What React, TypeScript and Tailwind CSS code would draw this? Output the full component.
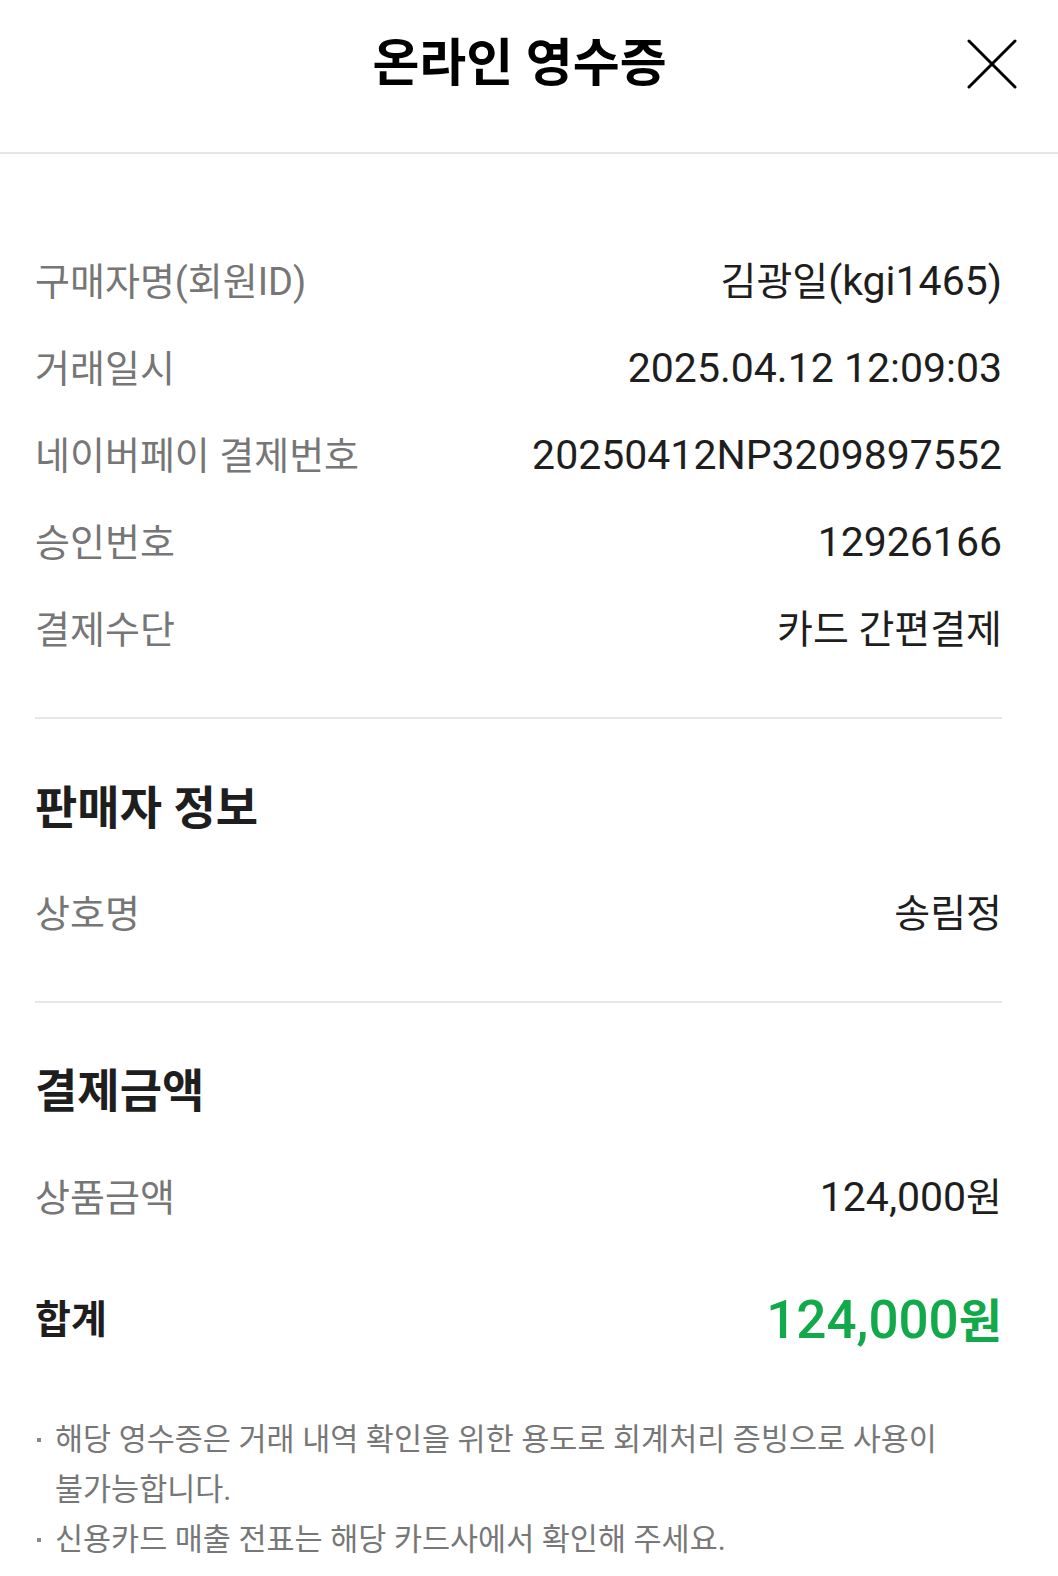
const buyerRows = [
    { label: '구매자명(회원ID)', value: <><span className="text-[39px]">김광일</span>(kgi1465)</> },
    { label: '거래일시', value: '2025.04.12 12:09:03' },
    { label: '네이버페이 결제번호', value: '20250412NP3209897552' },
    { label: '승인번호', value: '12926166' },
    { label: '결제수단', value: <span className="text-[39px]">카드 간편결제</span> },
];

const notes = [
    '해당 영수증은 거래 내역 확인을 위한 용도로 회계처리 증빙으로 사용이 불가능합니다.',
    '신용카드 매출 전표는 해당 카드사에서 확인해 주세요.',
];

function Row({ label, value }: { label: string; value: React.ReactNode }) {
    return (
        <div className="flex h-[87px] items-center justify-between">
            <span className="text-[38px] text-[#767676]">{label}</span>
            <span className="text-[41px] text-[#1e1e1e]">{value}</span>
        </div>
    );
}

function CloseIcon() {
    return (
        <svg width="50" height="50" viewBox="0 0 50 50" fill="none" stroke="currentColor" strokeWidth="3" strokeLinecap="round">
            <path d="M2 2L48 48M48 2L2 48" />
        </svg>
    );
}

export default function App() {
    return (
        <div className="min-h-[1576px] w-[1058px] bg-white font-['Roboto','Noto_Sans_CJK_KR',sans-serif] leading-none">
            <header className="h-[154px] border-b-2 border-[#e6e6e6]">
                <div className="flex h-[127px] items-center pl-[72px] pr-[41px]">
                    <h1 className="flex-1 text-center text-[51px] font-bold text-black">온라인 영수증</h1>
                    <button className="flex h-[50px] w-[50px] items-center justify-center text-black">
                        <CloseIcon />
                    </button>
                </div>
            </header>

            <main className="pl-[35px] pr-[56px]">
                <section className="pt-[84px] pb-[44px]">
                    {buyerRows.map((row) => (
                        <Row key={row.label} label={row.label} value={row.value} />
                    ))}
                </section>

                <section className="border-t-2 border-[#e6e6e6] pt-[59px] pb-[44px]">
                    <h2 className="flex h-[60px] items-center text-[46px] font-bold text-[#1e1e1e]">판매자 정보</h2>
                    <div className="mt-[32px]">
                        <Row label="상호명" value={<span className="text-[39px]">송림정</span>} />
                    </div>
                </section>

                <section className="border-t-2 border-[#e6e6e6] pt-[58px]">
                    <h2 className="flex h-[60px] items-center text-[46px] font-bold text-[#1e1e1e]">결제금액</h2>
                    <div className="mt-[33px]">
                        <Row label="상품금액" value={<>124,000<span className="text-[39px]">원</span></>} />
                    </div>
                    <div className="mt-[36px] flex h-[87px] items-center justify-between">
                        <span className="text-[39px] font-bold text-[#1e1e1e]">합계</span>
                        <span className="text-[53px] font-medium text-[#12a94b]">
                            124,000<span className="text-[47px] font-semibold">원</span>
                        </span>
                    </div>
                </section>

                <ul className="mt-[51px] pb-[12px]">
                    {notes.map((note) => (
                        <li key={note} className="flex text-[30.5px] leading-[50px] text-[#777777]">
                            <span className="mt-[23px] mr-[14px] ml-[2px] h-[4px] w-[4px] shrink-0 bg-[#8a8a8a]" />
                            <span className="break-keep">{note}</span>
                        </li>
                    ))}
                </ul>
            </main>
        </div>
    );
}
